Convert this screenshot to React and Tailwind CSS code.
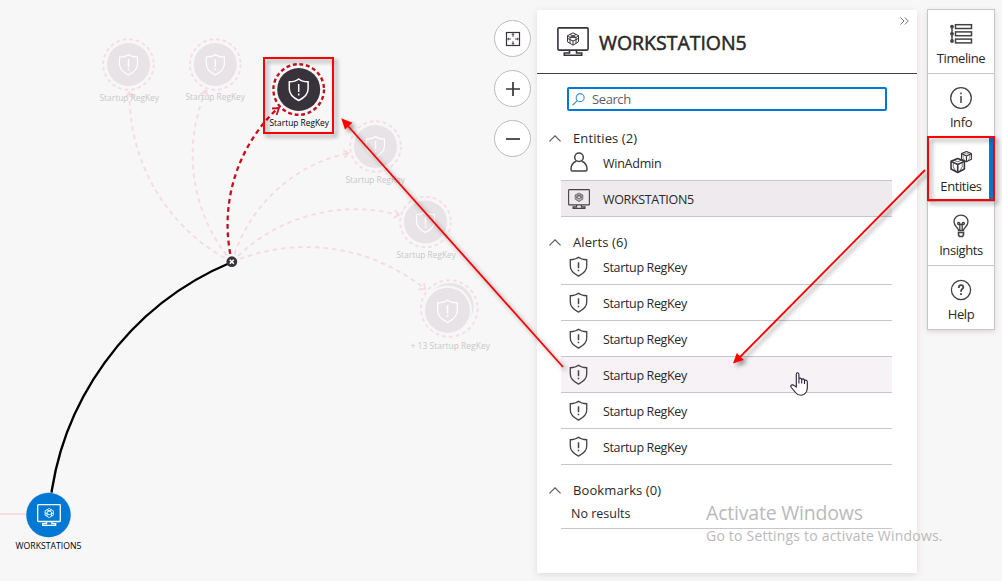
import React from "react";

const ShieldPath = "M12 1.5C9.5 3.6 6 4.2 2.6 4.3V11.500C2.600 17 7 20.500 12 23C17 20.500 21.400 17 21.400 11.500V4.300C18 4.200 14.500 3.600 12 1.500Z";

function Shield(props) {
  return (
    <svg viewBox="0 0 24 24" fill="none" stroke="currentColor" strokeWidth="1.5" {...props}>
      <path d={ShieldPath} />
      <path d="M12 7V14M12 15.600V17.400" strokeWidth="1.700" />
    </svg>
  );
}

function Monitor(props) {
  return (
    <svg viewBox="0 0 32 29" fill="none" stroke="currentColor" strokeWidth="1.6" {...props}>
      <rect x="0.900" y="0.900" width="30.200" height="22.200" rx="1" />
      <path d="M12.500 23.200V26H7.300V28.200H24.700V26H19.500V23.200" />
      <path d="M16 5.800L21.500 8.700V14.800L16 18.200L10.500 14.800V8.700ZM10.800 11.500L16 14L21.200 11.500M13 7.500L19 10.400V16.200M19 7.500L13 10.400V16.200M16 14V18" strokeWidth="1" />
      <path d="M10.500 8.700L13 10.400H19L21.500 8.700" strokeWidth="1" />
    </svg>
  );
}

function Chevron() {
  return (
    <svg viewBox="0 0 12 7" className="h-[7px] w-3 shrink-0" fill="none" stroke="#555" strokeWidth="1.100">
      <path d="M0.400 6.400L6 0.800L11.600 6.400" />
    </svg>
  );
}

function Person() {
  return (
    <svg viewBox="0 0 18 20" className="h-5 w-[18px] -translate-y-px" fill="none" stroke="currentColor" strokeWidth="1.500">
      <circle cx="9" cy="5.300" r="4.300" />
      <path d="M6.300 9.300C3 10.500 1 13.500 1 17.200Q1 19 2.500 19H15.500Q17 19 17 17.200C17 13.500 15 10.500 11.700 9.300" />
    </svg>
  );
}

const edges = [
  "M232 262A188 188 0 0 1 129.500 93",
  "M232 262A165 165 0 0 1 206 90",
  "M232 262A155 155 0 0 1 348 153",
  "M232 262A170 170 0 0 1 399 215",
  "M232 262A190 190 0 0 1 425 289",
];
const heads = [
  "M125.500 97L129.500 92.500L133.500 97",
  "M200.500 94L206 90L207.500 96",
  "M343 150L348.500 153L344.500 157.500",
  "M395 210L399 215L393.500 218",
  "M424 283L425 289L418.500 289.500",
];
const faded = [
  { x: 128.5, y: 64.5, ly: 101, lx: 99.5 },
  { x: 215.3, y: 64.5, ly: 100, lx: 185.5 },
  { x: 375.5, y: 146.5, ly: 183, lx: 345.5 },
  { x: 425.5, y: 222, ly: 258, lx: 396.5 },
];

function NodeShield({ x, y, s = 24, w = 1.3 }) {
  return (
    <g transform={`translate(${x - s / 2} ${y - s / 2}) scale(${s / 24})`} fill="none" stroke="#fff" strokeWidth={w}>
      <path d={ShieldPath} />
      <path d="M12 6.500V14.500M12 16V18" strokeWidth="1.500" />
    </g>
  );
}

function Graph() {
  return (
    <svg width="537" height="581" viewBox="0 0 537 581" className="block font-['Open_Sans','Noto_Sans',sans-serif] text-[9.500px]">
      <g fill="none" stroke="#f4dce0" strokeWidth="1.900">
        {edges.map((d) => <path key={d} d={d} strokeDasharray="4.500 4" />)}
        {heads.map((d) => <path key={d} d={d} />)}
      </g>
      <path d="M0 514H28" stroke="#f9dcdc" strokeWidth="2" />
      <path d="M49 515A298 298 0 0 1 232 262" fill="none" stroke="#000" strokeWidth="2.400" />
      {faded.map((n) => (
        <g key={n.x}>
          <circle cx={n.x} cy={n.y} r="21.500" fill="#e7e3e7" />
          <circle cx={n.x} cy={n.y} r="25.300" fill="none" stroke="#f6dde1" strokeWidth="1.900" strokeDasharray="3.700 2.920" />
          <NodeShield x={n.x} y={n.y} s={23} w={1.2} />
          <text x={n.lx} y={n.ly} fill="#c9c7c7" textLength="59.500" lengthAdjust="spacingAndGlyphs">Startup RegKey</text>
        </g>
      ))}
      <circle cx="449.300" cy="308.500" r="28.300" fill="none" stroke="#f6dde1" strokeWidth="1.900" strokeDasharray="3.700 3.140" />
      <circle cx="450" cy="306.500" r="23.500" fill="#e7e3e7" />
      <circle cx="447.500" cy="310" r="24.500" fill="#f7f7f7" />
      <circle cx="447.500" cy="310.300" r="22.500" fill="#e7e3e7" />
      <NodeShield x={447.5} y={311} s={25} w={1.2} />
      <text x="410.500" y="349" fill="#c9c7c7" textLength="79.500" lengthAdjust="spacingAndGlyphs">+ 13 Startup RegKey</text>

      <g fill="none" stroke="#c50f1f">
        <path d="M232 262A160 160 0 0 1 278 108" strokeWidth="2.300" strokeDasharray="4.800 3.600" />
        <path d="M272 108.500L279 108L276.500 115" strokeWidth="1.800" />
        <circle cx="298.700" cy="89.500" r="25.300" strokeWidth="2.400" strokeDasharray="3.900 2.720" />
      </g>
      <circle cx="298.700" cy="89.500" r="21.500" fill="#38333a" />
      <NodeShield x={298.7} y={89.5} s={24} w={1.5} />
      <text x="269.500" y="126" fill="#000" textLength="59.500" lengthAdjust="spacingAndGlyphs">Startup RegKey</text>

      <circle cx="231.800" cy="261.700" r="5.400" fill="#38333a" />
      <path d="M229.800 259.700L233.800 263.700M233.800 259.700L229.800 263.700" stroke="#fff" strokeWidth="1.600" />

      <circle cx="48.500" cy="515" r="22.800" fill="#e8e4e8" />
      <circle cx="48.500" cy="515" r="22.200" fill="#0078d4" />
      <g transform="translate(37 504)" fill="none" stroke="#fff" strokeWidth="1.300">
        <rect x="0.700" y="0.700" width="22.600" height="16.800" rx="0.800" />
        <path d="M9.500 17.500V19.700H5.700V21.400H18.700V19.700H14.900V17.500" />
        <path d="M12.200 4.500L16.300 6.800V11.200L12.200 13.600L8.100 11.200V6.800ZM8.300 9L12.200 10.800L16.100 9M10 5.800L14.500 8V12M14.500 5.800L10 8V12" strokeWidth="0.900" />
      </g>
      <text x="15.500" y="548.500" fill="#000" textLength="66" lengthAdjust="spacingAndGlyphs">WORKSTATION5</text>
    </svg>
  );
}

function RoundButton({ children }) {
  return (
    <div className="flex h-[37px] w-[37px] items-center justify-center rounded-full border border-[#bdbbbd] bg-white text-[#38333a]">
      {children}
    </div>
  );
}

function SectionTitle({ children, first }) {
  return (
    <div className={`${first ? "mt-5" : "mt-[18px]"} flex h-[14px] items-center gap-3 pl-3 text-[13px] tracking-[0.1px] text-[#292827]`}>
      <Chevron />
      <span className="leading-[14px]">{children}</span>
    </div>
  );
}

function Row({ icon, label, bg = "", tight = "tracking-[-0.350px]" }) {
  return (
    <div className={`ml-6 flex h-9 w-[331px] items-center border-b border-[#c8c6c8] ${bg}`}>
      <div className="flex w-[35px] items-center justify-center text-[#444244]">{icon}</div>
      <span className={`ml-[7px] pt-[3px] text-[12.500px] text-[#292827] ${tight}`}>{label}</span>
    </div>
  );
}

function Panel() {
  const shield = <Shield className="h-[21px] w-[21px]" />;
  return (
    <section className="mt-[10px] h-[563px] w-[380px] shrink-0 bg-white shadow-[0_2px_7px_rgba(90,30,60,0.13)]">
      <header className="relative flex h-16 items-center border-b border-[#444145] pl-5">
        <Monitor className="-mt-px h-[29px] w-8 text-[#38333a]" />
        <h1 className="ml-[10px] mt-[3px] text-[19.500px] tracking-[-0.030px] text-[#292827] [-webkit-text-stroke:0.5px_#292827]">WORKSTATION5</h1>
        <svg viewBox="0 0 9 8" className="absolute right-2 top-[7px] h-2 w-[9px]" fill="none" stroke="#777" strokeWidth="1">
          <path d="M0.500 0.500L4 4L0.500 7.500M4.800 0.500L8.300 4L4.800 7.500" />
        </svg>
      </header>
      <div className="ml-[30px] mt-[13px] flex h-6 w-80 items-center rounded-[2px] border-2 border-[#0078d4] pl-[3px]">
        <svg viewBox="0 0 14 14" className="h-[13px] w-[13px]" fill="none" stroke="#3a8fdb" strokeWidth="1.200">
          <circle cx="8.800" cy="5" r="4.300" />
          <path d="M5.700 8.100L0.600 13.200" />
        </svg>
        <span className="ml-[7px] text-[13px] leading-5 tracking-[-0.400px] text-[#605e5c]">Search</span>
      </div>

      <SectionTitle first>Entities (2)</SectionTitle>
      <Row icon={<Person />} label="WinAdmin" tight="tracking-[-0.250px]" />
      <Row icon={<Monitor className="h-5 w-[22px]" />} label="WORKSTATION5" bg="bg-[#efeaee]" />

      <SectionTitle>Alerts (6)</SectionTitle>
      <Row icon={shield} label="Startup RegKey" />
      <Row icon={shield} label="Startup RegKey" />
      <Row icon={shield} label="Startup RegKey" />
      <Row icon={shield} label="Startup RegKey" bg="bg-[#f7f2f6]" />
      <Row icon={shield} label="Startup RegKey" />
      <Row icon={shield} label="Startup RegKey" />

      <SectionTitle>Bookmarks (0)</SectionTitle>
      <div className="ml-6 flex h-8 w-[331px] items-center border-b border-[#c8c6c8] pl-[10px] pt-[3px] text-[12.500px] text-[#292827]">
        No results
      </div>
    </section>
  );
}

function Cube({ x, y, s }) {
  return (
    <g transform={`translate(${x} ${y}) scale(${s})`} strokeLinejoin="round">
      <path d="M7 0.700L13.300 3.200V10.500L7 13.800L0.700 10.500V3.200Z" />
      <path d="M0.900 3.400L7 6.300L13.100 3.400M7 6.300V13.500" />
      <path d="M3.500 2.200L7 3.800L10.500 2.200M2.800 5V8.500L5 12.500M11.200 5V8.500L9 12.500" strokeWidth="0.700" />
    </g>
  );
}

const tabs = [
  {
    label: "Timeline",
    icon: (
      <svg viewBox="0 0 24 24" className="h-6 w-6" fill="none" stroke="#444145" strokeWidth="1.500">
        <path d="M3 3V20" />
        <rect x="6.500" y="2.700" width="16" height="3.800" />
        <rect x="6.500" y="9.900" width="16" height="3.800" />
        <rect x="6.500" y="17.100" width="16" height="3.800" />
        <g fill="#444145" stroke="none"><circle cx="3" cy="4.600" r="1.900" /><circle cx="3" cy="11.800" r="1.900" /><circle cx="3" cy="19" r="1.900" /></g>
      </svg>
    ),
  },
  {
    label: "Info",
    icon: (
      <svg viewBox="0 0 24 24" className="h-6 w-6" fill="none" stroke="#444145" strokeWidth="1.300">
        <circle cx="12" cy="12" r="10.300" />
        <path d="M12 10V17M12 6.500V8.200" strokeWidth="1.500" />
      </svg>
    ),
  },
  {
    label: "Entities",
    icon: (
      <svg viewBox="0 0 24 24" className="h-6 w-6" fill="none" stroke="#38333a" strokeWidth="1.500">
        <Cube x={12} y={1} s={0.78} />
        <Cube x={1.3} y={7.800} s={1.06} />
      </svg>
    ),
  },
  {
    label: "Insights",
    icon: (
      <svg viewBox="0 0 24 24" className="h-6 w-6" fill="none" stroke="#444145" strokeWidth="1.300">
        <path d="M9.500 16.500C9.500 13.500 5 12.500 5 7.800C5 3.900 8 1.200 12 1.200S19 3.900 19 7.800C19 12.500 14.500 13.500 14.500 16.500ZM10.800 16V10.500M13.200 16V10.500M10.800 10.500H9.700A1.100 1.100 0 1 1 10.800 9.400V10.500H13.200V9.400A1.100 1.100 0 1 1 14.300 10.500H13.200" />
        <path d="M9.500 18.500H14.500V21L13.500 22.500H10.500L9.500 21Z" strokeWidth="1.600" />
      </svg>
    ),
  },
  {
    label: "Help",
    icon: (
      <svg viewBox="0 0 24 24" className="h-6 w-6" fill="none" stroke="#444145" strokeWidth="1.300">
        <circle cx="12" cy="12" r="9.600" />
        <path d="M9.800 10V9.300C9.800 7.900 10.800 7.200 12 7.200S14.300 7.900 14.300 9.200C14.300 10.900 12 11 12 13.200V13.700M12 15.200V16.900" strokeWidth="1.800" />
      </svg>
    ),
  },
];

function Tabs() {
  return (
    <nav className="ml-[10px] mt-[9px] h-[321px] w-[68px] border border-[#c8c6c8] bg-white shadow-[0_2px_5px_rgba(90,30,60,0.15)]">
      {tabs.map((t) => (
        <div
          key={t.label}
          className={`flex h-16 flex-col items-center border-b border-[#c8c6c8] pt-3 last:border-b-0 ${t.label === "Entities" ? "shadow-[inset_-5px_0_0_#0078d4]" : ""}`}
        >
          {t.icon}
          <span className="mt-[3px] text-[13px] leading-[18px] tracking-[-0.400px] text-[#292827]">{t.label}</span>
        </div>
      ))}
    </nav>
  );
}

function Annotations() {
  return (
    <svg width="1002" height="581" viewBox="0 0 1002 581" className="pointer-events-none absolute inset-0">
      <g className="drop-shadow-[3px_3px_2px_rgba(0,0,0,0.4)]" fill="none" stroke="#f00" strokeWidth="2">
        <rect x="264" y="58" width="69" height="75" />
        <rect x="928" y="137" width="66" height="63" />
        <path d="M925 170L740 357" strokeWidth="1.800" />
        <path d="M733 363.500L743.800 360L736.800 353Z" fill="#f00" stroke="none" />
        <path d="M563 367L348 126" strokeWidth="1.800" />
        <path d="M341.200 118.300L345 129.500L352.500 122.800Z" fill="#f00" stroke="none" />
      </g>
      <path d="M796.300 387V374.500Q796.300 372.800 797.500 372.800Q798.900 372.800 798.900 374.500V379.500Q799 378 800.400 378.100Q801.700 378.300 801.700 380Q802 378.800 803.200 378.900Q804.500 379.200 804.500 380.800Q805.200 379.900 806.200 380.300Q807.300 380.700 807.300 382V388Q807.300 391 805.500 393Q804.300 395.200 801 395.200Q797.500 395.200 796 393L791.300 387.500Q790.200 385.700 791.600 385Q793 384.500 794.300 385.600ZM798.900 379V383.500M801.700 380V383.500M804.500 381V384" fill="#fff" stroke="#222034" strokeWidth="1.100" />
    </svg>
  );
}

export default function App() {
  return (
    <main className="relative flex h-[581px] w-[1002px] overflow-hidden bg-[#f7f7f7] font-['Open_Sans','Noto_Sans',sans-serif]">
      <div className="relative w-[537px] shrink-0">
        <Graph />
        <div className="absolute left-[494px] top-5 flex flex-col gap-[13px]">
          <RoundButton>
            <svg viewBox="0 0 16 16" className="h-4 w-4" fill="none" stroke="currentColor" strokeWidth="1.200">
              <rect x="1.500" y="1.500" width="13" height="13" />
              <path d="M8 2.500V6M8 10V13.500M2.500 8H6M10 8H13.500M6.800 4L8 2.700L9.200 4M6.800 12L8 13.300L9.200 12M4 6.800L2.700 8L4 9.200M12 6.800L13.300 8L12 9.200" strokeWidth="0.900" />
            </svg>
          </RoundButton>
          <RoundButton>
            <svg viewBox="0 0 14 14" className="h-[14px] w-[14px]" stroke="currentColor" strokeWidth="1.700"><path d="M0 7H14M7 0V14" /></svg>
          </RoundButton>
          <RoundButton>
            <svg viewBox="0 0 14 14" className="h-[14px] w-[14px]" stroke="currentColor" strokeWidth="1.700"><path d="M0 7H14" /></svg>
          </RoundButton>
        </div>
      </div>
      <Panel />
      <Tabs />
      <div className="absolute left-[706px] top-[500px] whitespace-nowrap text-[#bbb9bb]">
        <div className="text-[19.500px] leading-[26px] tracking-[-0.2px]">Activate Windows</div>
        <div className="text-[14px] leading-5 tracking-[0.210px]">Go to Settings to activate Windows.</div>
      </div>
      <Annotations />
    </main>
  );
}
